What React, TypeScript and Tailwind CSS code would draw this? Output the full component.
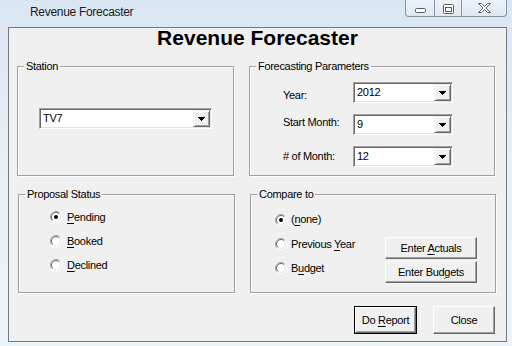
import type { ReactNode } from "react";

// Classic Win32 dialog look: etched group boxes, sunken combos, raised buttons

function Radio({ checked }: { checked?: boolean }) {
  return (
    <svg width="12" height="12" viewBox="0 0 12 12" className="shrink-0">
      <circle cx="6" cy="6" r="5.5" fill="#fff" />
      <path d="M2.1 9.9 A5.5 5.5 0 0 1 9.9 2.1" fill="none" stroke="#a0a0a0" strokeWidth="1" />
      <path d="M9.9 2.1 A5.5 5.5 0 0 1 2.1 9.9" fill="none" stroke="#ffffff" strokeWidth="1" />
      <path d="M2.8 9.2 A4.5 4.5 0 0 1 9.2 2.8" fill="none" stroke="#696969" strokeWidth="1" />
      <path d="M9.2 2.8 A4.5 4.5 0 0 1 2.8 9.2" fill="none" stroke="#e3e3e3" strokeWidth="1" />
      {checked && <circle cx="6" cy="6" r="2" fill="#000" />}
    </svg>
  );
}

function Arrow() {
  return (
    <svg width="7" height="4" viewBox="0 0 7 4" shapeRendering="crispEdges">
      <path d="M0 0h7v1h-1v1h-1v1h-1v1h-1v-1h-1v-1h-1v-1h-1z" fill="#000" />
    </svg>
  );
}

function Combo({ value, className }: { value: string; className: string }) {
  return (
    <div
      className={`flex h-[21px] items-stretch border border-t-[#a0a0a0] border-l-[#a0a0a0] border-b-white border-r-white bg-white p-[1px] shadow-[inset_1px_1px_0_#696969,inset_-1px_-1px_0_#e3e3e3] ${className}`}
    >
      <span className="flex-1 pl-[2px] leading-[17px]">{value}</span>
      <div className="flex w-[17px] items-center justify-center border border-t-[#f0f0f0] border-l-[#f0f0f0] border-b-[#696969] border-r-[#696969] bg-[#f0f0f0] shadow-[inset_1px_1px_0_#fff,inset_-1px_-1px_0_#a0a0a0]">
        <Arrow />
      </div>
    </div>
  );
}

function Group({
  label,
  className,
  children,
}: {
  label: string;
  className: string;
  children: ReactNode;
}) {
  return (
    <div
      className={`relative border border-[#a0a0a0] shadow-[inset_1px_1px_0_#fff,1px_1px_0_#fff] ${className}`}
    >
      <span className="absolute -top-[8px] left-[6px] bg-[#f0f0f0] px-[2px] leading-[14px]">
        {label}
      </span>
      {children}
    </div>
  );
}

function Button({
  children,
  className,
  isDefault,
}: {
  children: ReactNode;
  className: string;
  isDefault?: boolean;
}) {
  const raised =
    "flex items-center justify-center border border-t-white border-l-white border-b-[#696969] border-r-[#696969] bg-[#f0f0f0] shadow-[inset_-1px_-1px_0_#a0a0a0]";
  if (isDefault) {
    return (
      <div className={`flex border border-black ${className}`}>
        <div className={`flex-1 ${raised}`}>{children}</div>
      </div>
    );
  }
  return <div className={`${raised} ${className}`}>{children}</div>;
}

function U({ children }: { children: ReactNode }) {
  return <span className="underline underline-offset-[2px]">{children}</span>;
}

export default function App() {
  return (
    <div className="relative h-[346px] w-[512px] overflow-hidden bg-gradient-to-b from-[#dae6f3] via-[#e8f0f8] to-[#eaf5fa] font-['Liberation_Sans',Arial,sans-serif] text-[11px] tracking-[-0.3px] text-black">
      {/* Title bar */}
      <div className="flex h-[27px] items-start">
        <span className="ml-[30px] pt-[5px] text-[12px] leading-[14px] text-[#1b1b1b]">
          Revenue Forecaster
        </span>
        <div className="ml-auto mr-[5px] flex h-[17px] w-[102px] rounded-b-[4px] border border-t-0 border-[#8592a0] bg-gradient-to-b from-[#eef3f9] to-[#dfe8f2]">
          <div className="flex w-[28px] items-end justify-center pb-[3px]">
            <svg width="11" height="5" viewBox="0 0 11 5">
              <rect x="0.5" y="0.5" width="10" height="4" rx="1" fill="#fff" stroke="#535d69" />
            </svg>
          </div>
          <div className="flex w-[27px] items-center justify-center border-l border-[#8592a0] pt-[1px]">
            <svg width="11" height="10" viewBox="0 0 11 10">
              <rect x="0.5" y="0.5" width="10" height="9" rx="1" fill="#fff" stroke="#535d69" />
              <rect x="2.5" y="3.5" width="6" height="4" fill="#fff" stroke="#535d69" />
            </svg>
          </div>
          <div className="flex flex-1 items-center justify-center border-l border-[#8592a0]">
            <svg width="15" height="10" viewBox="0 0 15 10">
              <path
                d="M1.5 0.5h3l3 3 3-3h3l-4.5 4.5 4.5 4.5h-3l-3-3-3 3h-3l4.5-4.5z"
                fill="#fff"
                stroke="#535d69"
                strokeLinejoin="round"
              />
            </svg>
          </div>
        </div>
      </div>

      {/* Client area */}
      <div className="ml-[8px] h-[315px] w-[499px] border border-[#6f7a85] bg-[#f0f0f0]">
        <h1 className="text-center text-[21px] font-bold leading-[20px] tracking-normal">
          Revenue Forecaster
        </h1>

        {/* Station / Forecasting Parameters */}
        <div className="mt-[18px] flex gap-[15px] pl-[8px]">
          <Group label="Station" className="h-[110px] w-[217px] pl-[21px] pt-[41px]">
            <Combo value="TV7" className="w-[173px]" />
          </Group>
          <Group label="Forecasting Parameters" className="h-[110px] w-[246px] pl-[33px] pt-[15px]">
            <div className="flex items-start">
              <span className="w-[70px] pt-[3px] leading-[21px]">Year:</span>
              <Combo value="2012" className="w-[100px]" />
            </div>
            <div className="mt-[8px] flex items-start">
              <span className="-mt-[2px] w-[70px] leading-[21px]">Start Month:</span>
              <Combo value="9" className="w-[100px]" />
            </div>
            <div className="mt-[11px] flex items-start">
              <span className="w-[70px] leading-[21px]">
                # of Month:
              </span>
              <Combo value="12" className="w-[100px]" />
            </div>
          </Group>
        </div>

        {/* Proposal Status / Compare to */}
        <div className="mt-[18px] flex gap-[15px] pl-[9px]">
          <Group label="Proposal Status" className="h-[99px] w-[217px] pl-[31px] pt-[10px]">
            <div className="flex h-[24px] items-center gap-[5px]">
              <Radio checked />
              <span>
                <U>P</U>ending
              </span>
            </div>
            <div className="flex h-[24px] items-center gap-[5px]">
              <Radio />
              <span>
                <U>B</U>ooked
              </span>
            </div>
            <div className="flex h-[24px] items-center gap-[5px]">
              <Radio />
              <span>
                <U>D</U>eclined
              </span>
            </div>
          </Group>
          <Group label="Compare to" className="flex h-[99px] w-[246px] items-start pl-[24px]">
            <div className="w-[110px] pt-[12px]">
              <div className="flex h-[25px] items-center gap-[4px]">
                <Radio checked />
                <span>
                  (<U>n</U>one)
                </span>
              </div>
              <div className="flex h-[24px] items-center gap-[4px]">
                <Radio />
                <span>
                  Previous <U>Y</U>ear
                </span>
              </div>
              <div className="flex h-[24px] items-center gap-[4px]">
                <Radio />
                <span>
                  B<U>u</U>dget
                </span>
              </div>
            </div>
            <div className="flex flex-col gap-[2px] pt-[42px]">
              <Button className="h-[22px] w-[92px]">
                <span>
                  Enter <U>A</U>ctuals
                </span>
              </Button>
              <Button className="h-[22px] w-[92px]">
                <span>
                  Enter Bud<U>g</U>ets
                </span>
              </Button>
            </div>
          </Group>
        </div>

        {/* Dialog buttons */}
        <div className="mt-[13px] flex justify-end gap-[16px] pr-[11px]">
          <Button isDefault className="h-[28px] w-[63px]">
            <span>
              Do <U>R</U>eport
            </span>
          </Button>
          <Button className="h-[28px] w-[62px]">Close</Button>
        </div>
      </div>
    </div>
  );
}
